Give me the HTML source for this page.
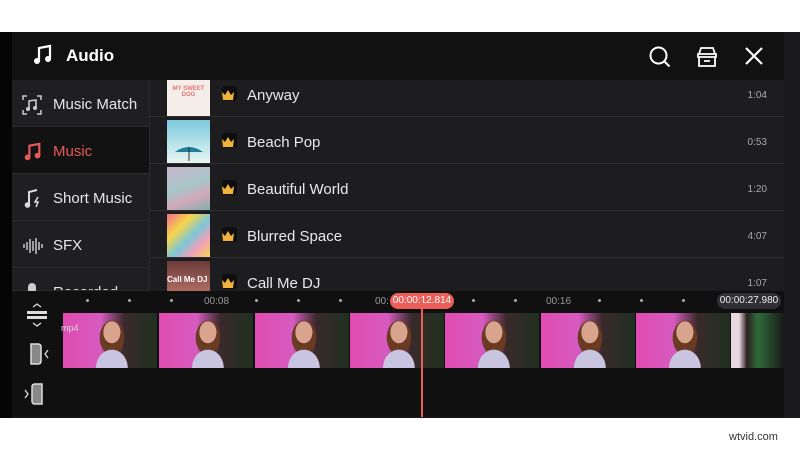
<!DOCTYPE html><html><head><style>
*{margin:0;padding:0;box-sizing:border-box}
body{width:800px;height:450px;background:#fff;position:relative;overflow:hidden;font-family:"Liberation Sans",sans-serif}
.a{position:absolute}
.side div.r{position:absolute;left:12px;width:137px;height:47px;border-bottom:1px solid #2c2c30;color:#e6e6e6;font-size:15px;line-height:50px;padding-left:41px}
.row{position:absolute;left:150px;width:634px;height:47px;border-bottom:1px solid #2e2e33}
.row .t{position:absolute;left:17px;top:3px;width:43px;height:43px}
.row .c{position:absolute;left:72px;top:16px;width:15px;height:15px;background:#0e0e0e;border-radius:3px}
.row .n{position:absolute;left:97px;top:17px;color:#e8e8e8;font-size:15px}
.row .d{position:absolute;right:17px;top:20px;color:#aaa;font-size:10px}
.fr{position:absolute;top:313px;width:94px;height:55px;background:radial-gradient(ellipse 14px 18px at 52% 35%,#d9a48e 60%,transparent 62%),radial-gradient(ellipse 26px 30px at 52% 100%,#c9c4e0 60%,transparent 62%),radial-gradient(ellipse 20px 28px at 52% 45%,#6b3a22 60%,transparent 62%),linear-gradient(90deg,#e04bb0 0%,#d65bc0 40%,#3a2a2a 65%,#1f3020 100%)}
.dot{position:absolute;top:299px;width:3px;height:3px;border-radius:50%;background:#aaa}
.tm{position:absolute;top:296px;color:#999;font-size:10px}
.cr{position:absolute;left:222px}
</style></head><body>
<div class="a" style="left:0;top:32px;width:800px;height:386px;background:#1a1a1c"></div>
<div class="a" style="left:0;top:32px;width:12px;height:386px;background:#050505"></div>
<div class="a" style="left:12px;top:32px;width:772px;height:48px;background:#111112"></div>
<svg class="a" style="left:33px;top:44px" width="20" height="22" viewBox="0 0 20 22"><path d="M6 17V4l11-2v13" fill="none" stroke="#fff" stroke-width="2.2"/><circle cx="4" cy="17" r="3" fill="#fff"/><circle cx="15" cy="15" r="3" fill="#fff"/></svg>
<div class="a" style="left:66px;top:46px;color:#fff;font-size:17px;font-weight:bold">Audio</div>
<svg class="a" style="left:648px;top:45px" width="24" height="24" viewBox="0 0 24 24"><circle cx="10.5" cy="10.5" r="8" fill="none" stroke="#fff" stroke-width="2"/><path d="M16.5 16.5l5 5" stroke="#fff" stroke-width="2"/></svg>
<svg class="a" style="left:695px;top:45px" width="24" height="24" viewBox="0 0 24 24"><path d="M4 9l2-6h12l2 6M3 9h18v3H3zM4 12v9h16v-9M9 16h6" fill="none" stroke="#fff" stroke-width="1.8"/></svg>
<svg class="a" style="left:744px;top:46px" width="20" height="20" viewBox="0 0 20 20"><path d="M2 2l16 16M18 2L2 18" stroke="#fff" stroke-width="2.2"/></svg>
<div class="side">
<div class="a" style="left:12px;top:80px;width:138px;height:211px;background:#1f1f22;border-right:1px solid #2c2c30"></div>
<div class="r" style="top:80px">Music Match</div>
<div class="r" style="top:127px;background:#121213;color:#e85a5a">Music</div>
<div class="r" style="top:174px">Short Music</div>
<div class="r" style="top:221px">SFX</div>
<div class="r" style="top:268px;height:23px;overflow:hidden">Recorded</div>
</div>
<svg class="a" style="left:22px;top:95px" width="20" height="20" viewBox="0 0 20 20"><path d="M1 5V1h4M15 1h4v4M1 15v4h4M15 19h4v-4" fill="none" stroke="#ccc" stroke-width="1.5"/><path d="M7 14V6l7-1v8" fill="none" stroke="#ccc" stroke-width="1.6"/><circle cx="6" cy="14" r="2" fill="#ccc"/><circle cx="13" cy="13" r="2" fill="#ccc"/></svg>
<svg class="a" style="left:24px;top:142px" width="18" height="20" viewBox="0 0 20 22"><path d="M6 17V4l11-2v13" fill="none" stroke="#e85a5a" stroke-width="2.4"/><circle cx="4" cy="17" r="3.2" fill="#e85a5a"/><circle cx="15" cy="15" r="3.2" fill="#e85a5a"/></svg>
<svg class="a" style="left:24px;top:189px" width="18" height="20" viewBox="0 0 18 20"><path d="M5 16V3l8-2" fill="none" stroke="#ddd" stroke-width="2"/><circle cx="3.5" cy="16" r="2.8" fill="#ddd"/><path d="M14 8l-3 5h3l-2 5" fill="none" stroke="#ddd" stroke-width="1.5"/></svg>
<svg class="a" style="left:22px;top:238px" width="22" height="16" viewBox="0 0 22 16"><path d="M2 6v4M5 4v8M8 1v14M11 3v10M14 0v16M17 4v8M20 6v4" stroke="#bbb" stroke-width="1.6"/></svg>
<svg class="a" style="left:25px;top:283px" width="14" height="8" viewBox="0 0 14 8"><rect x="3" y="0" width="8" height="12" rx="4" fill="#ccc"/></svg>
<div class="a" style="left:150px;top:80px;width:634px;height:211px;background:#1d1d20;overflow:hidden">
<div class="row" style="left:0;top:-10px"><div class="t" style="background:#f4ede8"><div style="color:#e07a7a;font-size:6px;text-align:center;margin-top:13px;font-weight:bold">MY SWEET<br>DOG</div></div><div class="c"></div><div class="n">Anyway</div><div class="d">1:04</div></div>
<div class="row" style="left:0;top:37px"><div class="t" style="background:linear-gradient(#7ec8dd,#b8e3ea 55%,#e9f4f0)"><svg width="43" height="43"><path d="M8 32q14-10 28 0z" fill="#1f7d98"/><path d="M22 27v14" stroke="#333"/></svg></div><div class="c"></div><div class="n">Beach Pop</div><div class="d">0:53</div></div>
<div class="row" style="left:0;top:84px"><div class="t" style="background:linear-gradient(160deg,#c7b6cc,#a7c6c8 45%,#d2a8b8 70%,#7fb0ae)"></div><div class="c"></div><div class="n">Beautiful World</div><div class="d">1:20</div></div>
<div class="row" style="left:0;top:131px"><div class="t" style="background:linear-gradient(135deg,#f56e8b,#f5d54a 30%,#7cc7d9 55%,#f1a0b8 75%,#f5d55a)"></div><div class="c"></div><div class="n">Blurred Space</div><div class="d">4:07</div></div>
<div class="row" style="left:0;top:178px"><div class="t" style="background:linear-gradient(#6b3a3a,#c98070)"><div style="color:#fff;font-size:8px;font-weight:bold;margin-top:14px">Call Me DJ</div></div><div class="c"></div><div class="n">Call Me DJ</div><div class="d">1:07</div></div>
</div>
<div class="a" style="left:12px;top:291px;width:772px;height:126px;background:#101011"></div>
<div class="dot" style="left:86px"></div><div class="dot" style="left:128px"></div><div class="dot" style="left:170px"></div>
<div class="tm" style="left:204px">00:08</div>
<div class="dot" style="left:255px"></div><div class="dot" style="left:297px"></div><div class="dot" style="left:339px"></div>
<div class="tm" style="left:375px">00:</div>
<div class="dot" style="left:472px"></div><div class="dot" style="left:514px"></div>
<div class="tm" style="left:546px">00:16</div>
<div class="dot" style="left:598px"></div><div class="dot" style="left:640px"></div><div class="dot" style="left:682px"></div>
<div class="a" style="left:390px;top:293px;width:64px;height:16px;border-radius:8px;background:#ec5e57;color:#fff;font-size:10px;text-align:center;line-height:16px">00:00:12.814</div>
<div class="a" style="left:717px;top:293px;width:64px;height:16px;border-radius:8px;background:#2f2f35;color:#eee;font-size:10px;text-align:center;line-height:16px">00:00:27.980</div>
<div class="fr" style="left:63px"></div><div class="fr" style="left:159px"></div><div class="fr" style="left:255px"></div><div class="fr" style="left:350px"></div><div class="fr" style="left:445px"></div><div class="fr" style="left:541px"></div><div class="fr" style="left:636px"></div>
<div class="a" style="left:731px;top:313px;width:53px;height:55px;background:linear-gradient(90deg,#e8d8e0 15%,#2b2020 30%,#2f6a3a 50%,#1a1a1a)"></div>
<div class="a" style="left:61px;top:323px;color:#ddd;font-size:9px">mp4</div>
<div class="a" style="left:421px;top:300px;width:2px;height:117px;background:#ec5e57"></div>
<svg class="a" style="left:26px;top:302px" width="22" height="26" viewBox="0 0 22 26"><path d="M7 5l4-3 4 3M7 21l4 3 4-3" fill="none" stroke="#ddd" stroke-width="1.3"/><rect x="1" y="9" width="20" height="3" fill="#ddd"/><rect x="1" y="14" width="20" height="3" fill="#ddd"/></svg>
<svg class="a" style="left:28px;top:343px" width="22" height="22" viewBox="0 0 22 22"><path d="M3 1h7q3 0 3 3v14q0 3-3 3H3z" fill="#888" stroke="#ddd" stroke-width="1.5"/><path d="M20 7l-3 4 3 4" fill="none" stroke="#ddd" stroke-width="1.3"/></svg>
<svg class="a" style="left:23px;top:383px" width="22" height="22" viewBox="0 0 22 22"><path d="M19 1h-7q-3 0-3 3v14q0 3 3 3h7z" fill="#888" stroke="#ddd" stroke-width="1.5"/><path d="M2 7l3 4-3 4" fill="none" stroke="#ddd" stroke-width="1.3"/></svg>
<div class="a" style="left:729px;top:431px;color:#333;font-size:11px">wtvid.com</div>
<svg class="cr" style="top:90px" width="12" height="10" viewBox="0 0 12 10"><path d="M0 2l3 3 3-5 3 5 3-3-1 8H1z" fill="#f2b33d"/></svg>
<svg class="cr" style="top:137px" width="12" height="10" viewBox="0 0 12 10"><path d="M0 2l3 3 3-5 3 5 3-3-1 8H1z" fill="#f2b33d"/></svg>
<svg class="cr" style="top:184px" width="12" height="10" viewBox="0 0 12 10"><path d="M0 2l3 3 3-5 3 5 3-3-1 8H1z" fill="#f2b33d"/></svg>
<svg class="cr" style="top:231px" width="12" height="10" viewBox="0 0 12 10"><path d="M0 2l3 3 3-5 3 5 3-3-1 8H1z" fill="#f2b33d"/></svg>
<svg class="cr" style="top:278px" width="12" height="10" viewBox="0 0 12 10"><path d="M0 2l3 3 3-5 3 5 3-3-1 8H1z" fill="#f2b33d"/></svg>
</body></html>
